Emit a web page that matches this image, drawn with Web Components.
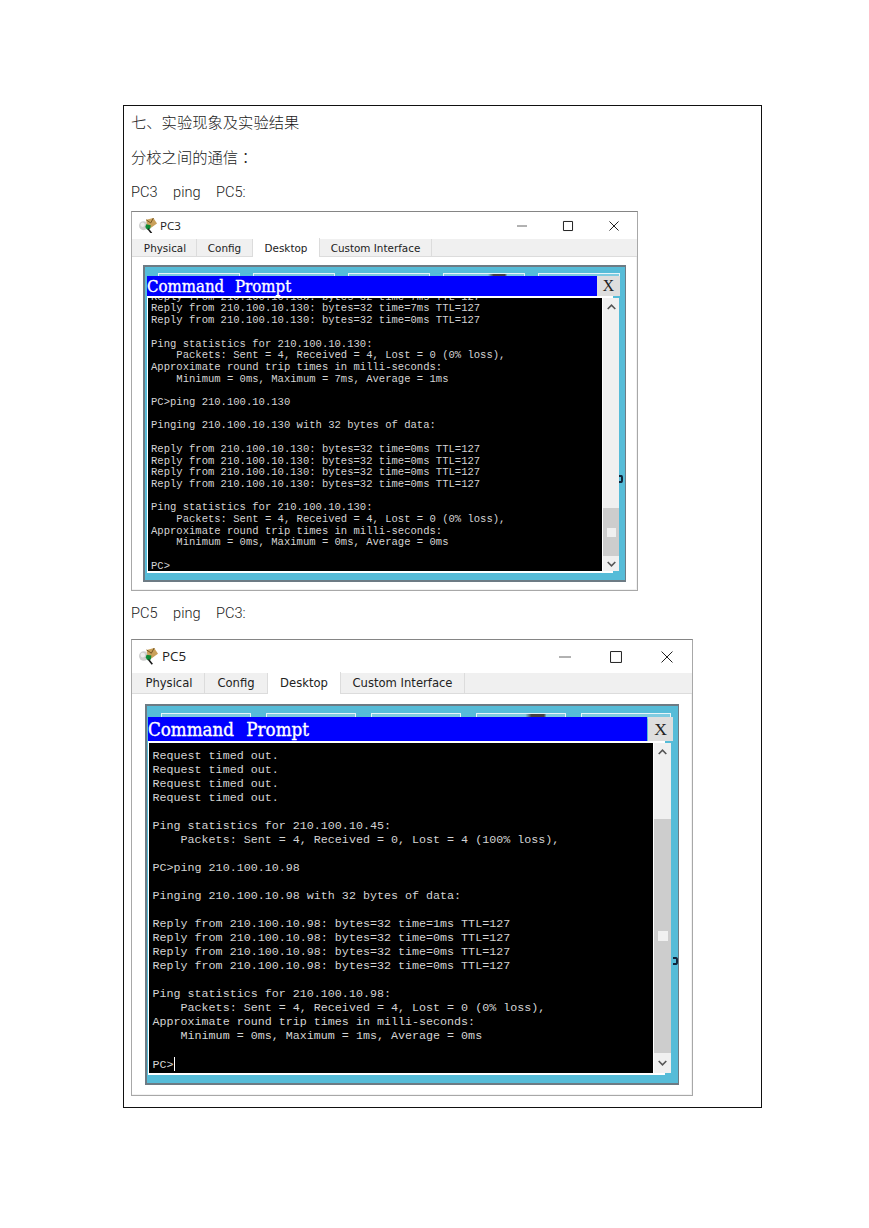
<!DOCTYPE html>
<html lang="zh">
<head>
<meta charset="utf-8">
<title>实验现象及实验结果</title>
<style>
html,body{margin:0;padding:0;background:#fff}
</style>
</head>
<body>
<doc-page>
  <doc-line style="--h:29px">七、实验现象及实验结果</doc-line>
  <doc-line style="--h:41px">分校之间的通信<span style="font-family:'Noto Sans CJK TC',sans-serif">：</span></doc-line>
  <doc-line style="--h:35px;--padb:4px;--fs:14.6px">PC3<doc-gap></doc-gap>ping<doc-gap></doc-gap>PC5:</doc-line>
  <pt-window class="small" name="PC3"><pt-line></pt-line>Reply from 210.100.10.130: bytes=32 time=7ms TTL=127
Reply from 210.100.10.130: bytes=32 time=7ms TTL=127
Reply from 210.100.10.130: bytes=32 time=0ms TTL=127

Ping statistics for 210.100.10.130:
    Packets: Sent = 4, Received = 4, Lost = 0 (0% loss),
Approximate round trip times in milli-seconds:
    Minimum = 0ms, Maximum = 7ms, Average = 1ms

PC&gt;ping 210.100.10.130

Pinging 210.100.10.130 with 32 bytes of data:

Reply from 210.100.10.130: bytes=32 time=0ms TTL=127
Reply from 210.100.10.130: bytes=32 time=0ms TTL=127
Reply from 210.100.10.130: bytes=32 time=0ms TTL=127
Reply from 210.100.10.130: bytes=32 time=0ms TTL=127

Ping statistics for 210.100.10.130:
    Packets: Sent = 4, Received = 4, Lost = 0 (0% loss),
Approximate round trip times in milli-seconds:
    Minimum = 0ms, Maximum = 0ms, Average = 0ms

PC&gt;</pt-window>
  <doc-line style="--h:48px;--padb:5px;--fs:14.6px">PC5<doc-gap></doc-gap>ping<doc-gap></doc-gap>PC3:</doc-line>
  <pt-window class="large" name="PC5">Request timed out.
Request timed out.
Request timed out.
Request timed out.

Ping statistics for 210.100.10.45:
    Packets: Sent = 4, Received = 0, Lost = 4 (100% loss),

PC&gt;ping 210.100.10.98

Pinging 210.100.10.98 with 32 bytes of data:

Reply from 210.100.10.98: bytes=32 time=1ms TTL=127
Reply from 210.100.10.98: bytes=32 time=0ms TTL=127
Reply from 210.100.10.98: bytes=32 time=0ms TTL=127
Reply from 210.100.10.98: bytes=32 time=0ms TTL=127

Ping statistics for 210.100.10.98:
    Packets: Sent = 4, Received = 4, Lost = 0 (0% loss),
Approximate round trip times in milli-seconds:
    Minimum = 0ms, Maximum = 1ms, Average = 0ms

PC&gt;<pt-caret></pt-caret></pt-window>
</doc-page>
<script>
function shadow(el, html){
  const r = el.attachShadow({mode:'open'});
  r.innerHTML = html;
  return r;
}
customElements.define('doc-page', class extends HTMLElement{
  constructor(){super();shadow(this,`<style>
    :host{display:block;width:869px;height:1228px;box-sizing:border-box;padding:105px 0 0 123px;
      font-family:"Roboto","Noto Sans CJK SC",sans-serif;color:#1a1a1a}
    .cell{box-sizing:border-box;width:639px;height:1003px;border:1px solid #111;padding:0 7px 0 7px}
    ::slotted(pt-window.small){
      --win-w:507px;--title-h:27px;--tabs-h:18px;--tab-font:10.4px;--title-font:11.6px;--title-gap:3px;
      --tab1:63px;--tab2:56px;--tab3:67px;--tab4:112px;
      --pad-top:8px;--pad-bottom:7px;--frame-left:11px;--frame-w:483px;--frame-h:317px;
      --box-left:13px;--box-w:82px;--box-gap:13px;--box-top:5.5px;
      --cmd-left:2px;--cmd-top:9px;--blue-w:450px;--x-w:23px;--x-gap:0px;--blue-h:20px;--cmd-font:16.7px;--cmd-ws:6px;
      --white-h:2px;--term-left:1px;--term-w:454px;--term-h:273px;--scroll-w:16px;
      --term-font:10.55px;--term-lh:11.7px;--term-pt:0px;--term-pl:3px;
      --thumb-top:210px;--thumb-h:48px;--grip:9px;--btn-w:46px;--cap:10px;
      --speck-right:2px;--speck-top:208px;--speck-w:4px;--speck-h:8px;--icon-w:18px
    }
    ::slotted(pt-window.large){
      --win-w:562px;--title-h:33px;--tabs-h:21px;--tab-font:11.6px;--title-font:13.4px;--title-gap:4px;
      --tab1:71px;--tab2:63px;--tab3:73px;--tab4:124px;
      --pad-top:10px;--pad-bottom:9px;--frame-left:13px;--frame-w:534px;--frame-h:381px;
      --box-left:14px;--box-w:90px;--box-gap:15px;--box-top:7px;
      --cmd-left:1px;--cmd-top:11px;--blue-w:499px;--x-w:25px;--x-gap:1px;--blue-h:24px;--cmd-font:18.6px;--cmd-ws:7px;
      --white-h:2px;--term-left:1px;--term-w:504px;--term-h:330px;--scroll-w:17px;
      --term-font:11.7px;--term-lh:14px;--term-pt:6px;--term-pl:3.5px;
      --thumb-top:76px;--thumb-h:234px;--grip:10px;--btn-w:51px;--cap:12px;
      --speck-right:0px;--speck-top:251px;--speck-w:5px;--speck-h:8px;--icon-w:19px
    }
    </style><div class="cell"><slot></slot></div>`);}
});
customElements.define('doc-line', class extends HTMLElement{
  constructor(){super();shadow(this,`<style>
    :host{display:flex;align-items:center;box-sizing:border-box;height:var(--h,34px);padding-bottom:var(--padb,0);
      font-size:var(--fs,15.3px);font-weight:300;white-space:nowrap;color:#1a1a1a}
    </style><slot></slot>`);}
});
customElements.define('doc-gap', class extends HTMLElement{
  constructor(){super();shadow(this,`<style>:host{display:inline-block;width:15.5px}</style>`);}
});
customElements.define('pt-caret', class extends HTMLElement{
  constructor(){super();shadow(this,`<style>:host{display:inline-block;width:1px;height:14px;background:#fff;vertical-align:-3px}</style>`);}
});
customElements.define('pt-line', class extends HTMLElement{
  constructor(){super();shadow(this,`<style>:host{display:block;margin-top:-6.3px;height:0}</style>`);}
});
customElements.define('pt-icon', class extends HTMLElement{
  constructor(){super();shadow(this,`<style>:host{display:block;flex:none;width:var(--icon-w);line-height:0}svg{width:100%;height:auto}</style>
    <svg viewBox="0 0 20 17" aria-hidden="true">
      <circle cx="5" cy="8.5" r="5" fill="#cfcfcf"/>
      <circle cx="4" cy="7.5" r="2.4" fill="#eee"/>
      <path d="M8 2L16 0 20 6 13 11 9 9z" fill="#c9a05a"/>
      <path d="M8 2L13 5.5 16 0" fill="none" stroke="#6b4e1c" stroke-width="1"/>
      <path d="M8 7L13 8 12.5 12 9 13 7 10z" fill="#0d8a35"/>
      <path d="M10 12L14 17" stroke="#1a1a1a" stroke-width="1.7" fill="none"/>
    </svg>`);}
});
customElements.define('pt-chrome-buttons', class extends HTMLElement{
  constructor(){super();shadow(this,`<style>
    :host{display:flex;flex:none;margin-left:auto}
    span{display:flex;align-items:center;justify-content:center;width:var(--btn-w)}
    svg{width:var(--cap);height:var(--cap);overflow:visible}
    path,rect{fill:none;stroke:#222;stroke-width:1;vector-effect:non-scaling-stroke}
    </style>
    <span><svg viewBox="0 0 11 11"><path d="M0 5.5H11" stroke-opacity=".7"/></svg></span>
    <span><svg viewBox="0 0 11 11"><rect x=".5" y=".5" width="10" height="10"/></svg></span>
    <span><svg viewBox="0 0 11 11"><path d="M.5 .5L10.5 10.5M10.5 .5L.5 10.5"/></svg></span>`);}
});
customElements.define('pt-scrollbar', class extends HTMLElement{
  constructor(){super();shadow(this,`<style>
    :host{display:flex;flex-direction:column;flex:none;width:var(--scroll-w);margin-left:1px;background:#f0f0f0;position:relative}
    .up{height:var(--thumb-top);flex:none;display:flex;justify-content:center;align-items:flex-start;padding-top:6px;box-sizing:border-box}
    .thumb{height:var(--thumb-h);flex:none;background:#cdcdcd;display:flex;align-items:center;justify-content:center}
    .grip{width:var(--grip);height:var(--grip);background:#f0f0f0}
    .down{flex:1;display:flex;justify-content:center;align-items:center}
    svg{width:9px;height:6px}
    path{fill:none;stroke:#555;stroke-width:1.6}
    </style>
    <div class="up"><svg viewBox="0 0 9 6"><path d="M.7 5L4.5 1.2 8.3 5"/></svg></div>
    <div class="thumb"><div class="grip"></div></div>
    <div class="down"><svg viewBox="0 0 9 6"><path d="M.7 1L4.5 4.8 8.3 1"/></svg></div>`);}
});
customElements.define('pt-window', class extends HTMLElement{
  constructor(){super();const name=this.getAttribute('name')||'';
    shadow(this,`<style>
    :host{display:block;box-sizing:border-box;width:var(--win-w);border:1px solid #a8a8a8;border-top-color:#858585;background:#fff;color:#222}
    .title{display:flex;align-items:center;height:var(--title-h);padding-left:7px;gap:var(--title-gap);font:var(--title-font)/1 "Open Sans","Liberation Sans",sans-serif}
    .tabs{display:flex;height:var(--tabs-h);box-sizing:border-box;padding-left:2px;background:#f0f0f0;border-bottom:1px solid #dcdcdc;
      font:var(--tab-font)/1 "DejaVu Sans",sans-serif}
    .tab{display:flex;align-items:center;justify-content:center;box-sizing:border-box;border-right:1px solid #dcdcdc;height:100%;padding-top:2px}
    .tab.on{background:#fff;margin-top:-1px;height:calc(100% + 2px);position:relative;padding-top:1px}
    .t1{width:var(--tab1)}.t2{width:var(--tab2)}.t3{width:var(--tab3)}.t4{width:var(--tab4)}
    .body{padding:var(--pad-top) 0 var(--pad-bottom) var(--frame-left);border:solid #f2f2f2;border-width:0 1px 1px 0}
    .frame{position:relative;box-sizing:border-box;width:var(--frame-w);height:var(--frame-h);
      background:#56bcd8;border:solid #6d7b84;border-width:2px 1px 2px 2px;overflow:hidden}
    .boxes{display:flex;gap:var(--box-gap);padding:var(--box-top) 0 0 var(--box-left)}
    .box{width:var(--box-w);height:6px;flex:none;box-sizing:border-box;border:1px solid #e8f4f8;border-bottom:0;background:#7fcbe0}
    .box.pic{background:linear-gradient(90deg,#7fcbe0 55%,#444 62%,#444 76%,#7fcbe0 79%)}
    .cmd{position:absolute;left:var(--cmd-left);top:var(--cmd-top);display:flex;flex-direction:column}
    .head{display:flex;gap:var(--x-gap);height:var(--blue-h);position:relative;z-index:2}
    .blue{width:var(--blue-w);background:#00f;color:#fff;font:var(--cmd-font)/calc(var(--blue-h) + 1px) "DejaVu Serif",serif;font-stretch:condensed;word-spacing:var(--cmd-ws);-webkit-text-stroke:.35px #fff;white-space:nowrap;overflow:hidden}
    .x{width:var(--x-w);background:#dedede;color:#222;text-align:center;font:calc(var(--cmd-font) - 1px)/var(--blue-h) "Liberation Serif",serif}
    .row{display:flex;margin-top:var(--white-h);height:var(--term-h);margin-left:var(--term-left)}
    .cmd::before{content:"";position:absolute;left:0;right:calc(var(--x-w) - var(--scroll-w));top:var(--blue-h);bottom:-2px;background:#fff;z-index:0}
    .row{position:relative;z-index:1}
    .term{box-sizing:border-box;width:var(--term-w);height:100%;flex:none;background:#000;color:#d4d4d4;overflow:hidden;
      padding:var(--term-pt) 0 0 var(--term-pl);font:var(--term-font)/var(--term-lh) "Liberation Mono",monospace;white-space:pre}
    .speck{position:absolute;right:var(--speck-right);top:var(--speck-top);width:var(--speck-w);height:var(--speck-h);box-sizing:border-box;border:2px solid #10243a;border-left-width:0;border-radius:0 40% 40% 0}
    </style>
    <div class="title"><pt-icon></pt-icon><span>${name}</span><pt-chrome-buttons></pt-chrome-buttons></div>
    <div class="tabs">
      <div class="tab t1">Physical</div><div class="tab t2">Config</div><div class="tab t3 on">Desktop</div><div class="tab t4">Custom Interface</div>
    </div>
    <div class="body"><div class="frame">
      <div class="boxes"><div class="box"></div><div class="box"></div><div class="box"></div><div class="box pic"></div><div class="box"></div></div>
      <div class="speck"></div>
      <div class="cmd">
        <div class="head"><div class="blue">Command Prompt</div><div class="x">X</div></div>
        <div class="row"><div class="term"><slot></slot></div><pt-scrollbar></pt-scrollbar></div>
      </div>
    </div></div>`);}
});
</script>
</body>
</html>
